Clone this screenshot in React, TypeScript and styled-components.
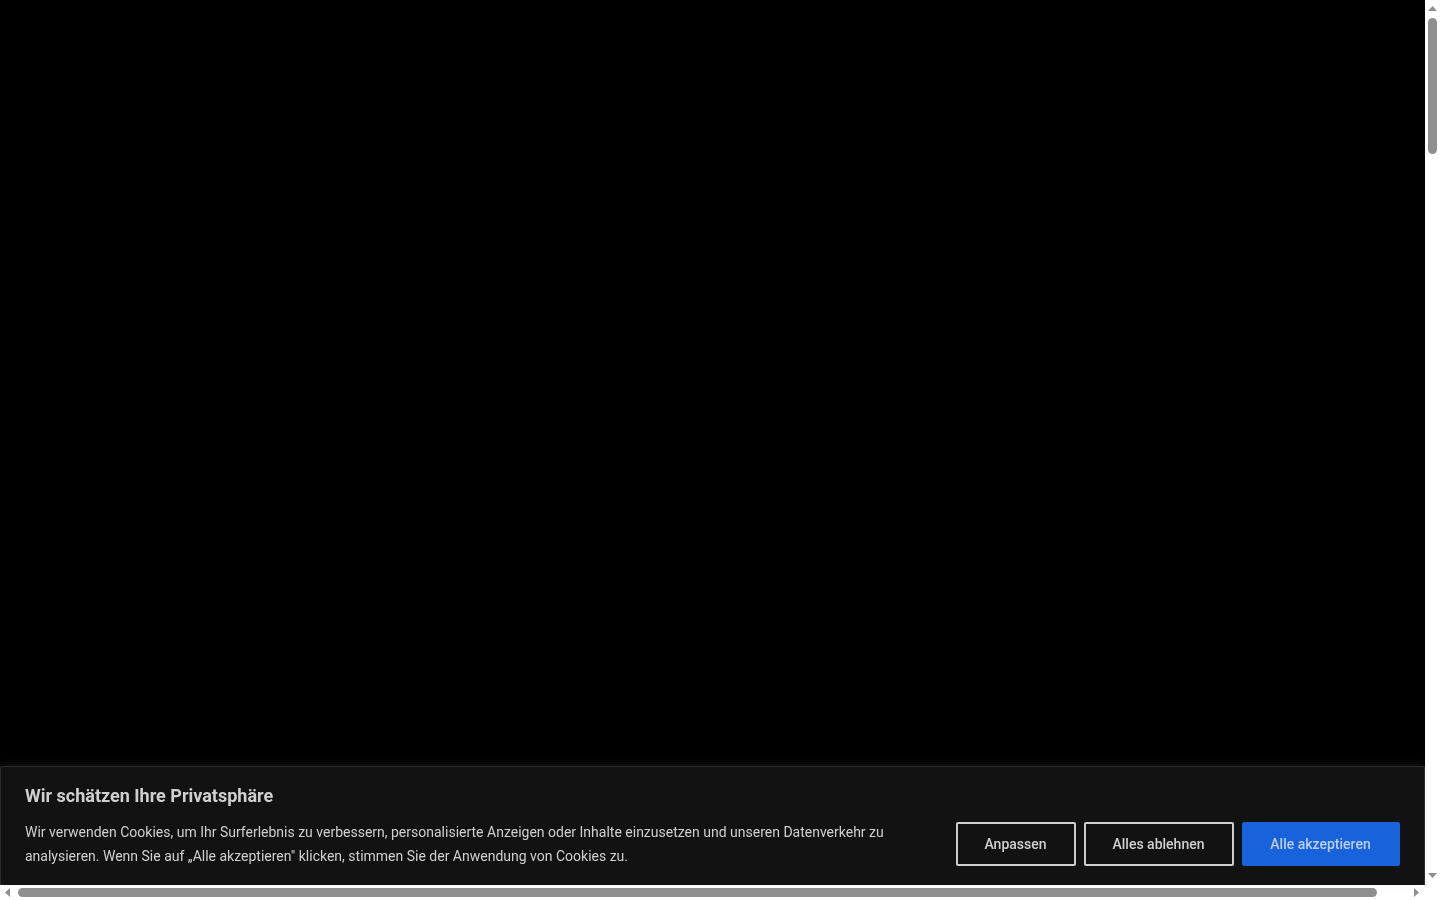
import React from 'react';
import styled, { createGlobalStyle } from 'styled-components';

const GlobalStyle = createGlobalStyle`
  html, body {
    margin: 0;
    height: 100%;
    overflow: hidden;
    background: #fff;
    font-family: Roboto, "Liberation Sans", sans-serif;
  }
`;

const Frame = styled.div`
  display: grid;
  grid-template-columns: 1425px 15px;
  grid-template-rows: 885px 15px;
  width: 1440px;
  height: 900px;
`;

const Viewport = styled.main`
  display: flex;
  flex-direction: column;
  justify-content: flex-end;
  background: #000;
`;

const Banner = styled.section`
  box-sizing: border-box;
  height: 119px;
  padding: 17px 24px 0;
  background: #121212;
  border: 1px solid #2b2b2b;
  border-bottom: none;
  border-radius: 2px 2px 0 0;
  box-shadow: 0 -1px 10px rgba(172, 171, 171, 0.15);
  color: #d0d0d0;
  will-change: opacity;
`;

const Title = styled.h2`
  margin: 0 0 12px;
  font-size: 18px;
  line-height: 24px;
  font-weight: 700;
`;

const Row = styled.div`
  display: flex;
  align-items: center;
  justify-content: space-between;
`;

const Message = styled.p`
  width: 880px;
  margin: 0;
  font-size: 14px;
  line-height: 24px;
`;

const Actions = styled.div`
  display: flex;
  gap: 8px;
`;

const ActionButton = styled.button<{ $primary?: boolean; $width: number }>`
  box-sizing: border-box;
  width: ${(p) => p.$width}px;
  height: 44px;
  padding: 0 1px 0 0;
  border: 2px solid ${(p) => (p.$primary ? '#1863dc' : '#d0d0d0')};
  border-radius: 2px;
  background: ${(p) => (p.$primary ? '#1863dc' : 'transparent')};
  color: ${(p) => (p.$primary ? '#bccfed' : '#d0d0d0')};
  font-family: inherit;
  font-size: 14px;
  font-weight: 500;
  cursor: pointer;
`;

const VerticalBar = styled.div`
  display: flex;
  flex-direction: column;
  align-items: center;
  background: #fff;
`;

const HorizontalBar = styled.div`
  display: flex;
  align-items: center;
  background: #fff;
`;

const VerticalThumb = styled.div`
  width: 9px;
  height: 136px;
  margin-top: 3px;
  margin-bottom: auto;
  border-radius: 5px;
  background: #8f8f8f;
`;

const HorizontalThumb = styled.div`
  width: 1359px;
  height: 9px;
  margin-left: 3px;
  margin-right: auto;
  border-radius: 5px;
  background: #8f8f8f;
`;

const Corner = styled.div`
  background: #fff;
`;

const Arrow = styled.svg`
  display: block;
  flex: none;
  width: 15px;
  height: 15px;
  fill: #8f8f8f;
`;

const ArrowIcon: React.FunctionComponent<{ points: string }> = ({ points }) => (
  <Arrow viewBox="0 0 15 15">
    <polygon points={points} />
  </Arrow>
);

const App: React.FunctionComponent = () => (
  <>
    <GlobalStyle />
    <Frame>
      <Viewport>
        <Banner>
          <Title>Wir schätzen Ihre Privatsphäre</Title>
          <Row>
            <Message>
              Wir verwenden Cookies, um Ihr Surferlebnis zu verbessern, personalisierte Anzeigen oder Inhalte einzusetzen und unseren Datenverkehr zu analysieren. Wenn Sie auf „Alle akzeptieren" klicken, stimmen Sie der Anwendung von Cookies zu.
            </Message>
            <Actions>
              <ActionButton $width={120}>Anpassen</ActionButton>
              <ActionButton $width={150}>Alles ablehnen</ActionButton>
              <ActionButton $width={158} $primary>Alle akzeptieren</ActionButton>
            </Actions>
          </Row>
        </Banner>
      </Viewport>
      <VerticalBar>
        <ArrowIcon points="3,11 12,11 7.5,6" />
        <VerticalThumb />
        <ArrowIcon points="3,3 12,3 7.5,8" />
      </VerticalBar>
      <HorizontalBar>
        <ArrowIcon points="10,3 10,12 5,7.5" />
        <HorizontalThumb />
        <ArrowIcon points="4,3 4,12 9,7.5" />
      </HorizontalBar>
      <Corner />
    </Frame>
  </>
);

export default App;
